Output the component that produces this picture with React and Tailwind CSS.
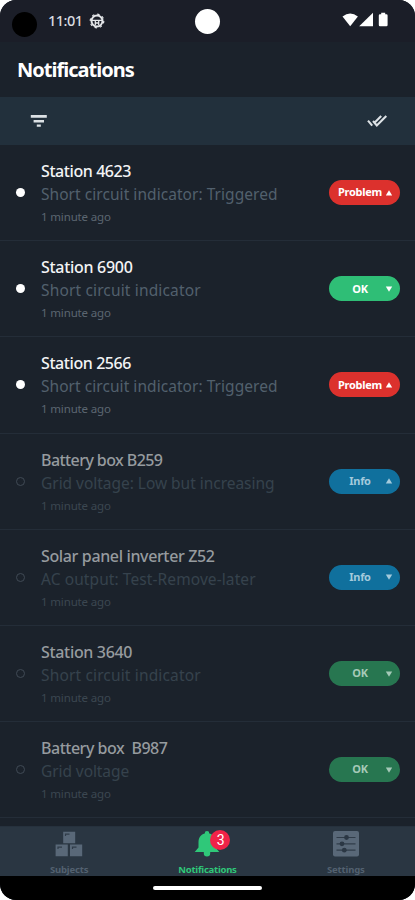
const notifications = [
  { id: 1, title: 'Station 4623', detail: 'Short circuit indicator: Triggered', status: 'Problem', trend: 'up', unread: true, titleTone: 'tracking-[-0.42px]', detailTone: 'tracking-[0.05px]' },
  { id: 2, title: 'Station 6900', detail: 'Short circuit indicator', status: 'OK', trend: 'down', unread: true, titleTone: 'tracking-[-0.3px]', detailTone: 'tracking-[0.15px]' },
  { id: 3, title: 'Station 2566', detail: 'Short circuit indicator: Triggered', status: 'Problem', trend: 'up', unread: true, titleTone: 'tracking-[-0.42px]', detailTone: 'tracking-[0.05px]' },
  { id: 4, title: 'Battery box B259', detail: 'Grid voltage: Low but increasing', status: 'Info', trend: 'up', unread: false, titleTone: 'tracking-[-0.57px]', detailTone: 'tracking-[-0.03px]' },
  { id: 5, title: 'Solar panel inverter Z52', detail: 'AC output: Test-Remove-later', status: 'Info', trend: 'down', unread: false, titleTone: 'tracking-[-0.36px]', detailTone: 'tracking-[0.09px]' },
  { id: 6, title: 'Station 3640', detail: 'Short circuit indicator', status: 'OK', trend: 'down', unread: false, titleTone: 'tracking-[-0.33px]', detailTone: 'tracking-[0.15px]' },
  { id: 7, title: 'Battery box  B987', detail: 'Grid voltage', status: 'OK', trend: 'down', unread: false, titleTone: 'tracking-[-0.49px]', detailTone: 'tracking-[-0.08px]' },
];

const pillTones = {
  Problem: 'bg-[#dc312d] text-white',
  OK: 'bg-[#2fbe76] text-white',
  Info: 'bg-[#1098cf] text-white',
};

const readPillTones = {
  Problem: 'bg-[#8a2a2c] text-[#b5c3c8]',
  OK: 'bg-[#277650] text-[#a5c9b8]',
  Info: 'bg-[#10709d] text-[#a3cadc]',
};

function StatusBar() {
  return (
    <div className="relative flex h-[42px] items-center justify-between bg-[#1b1e28] pr-[27px] pl-[12px]">
      <div className="flex items-center">
        <span className="mt-[6px] h-[25px] w-[25px] rounded-full bg-black" />
        <span className="ml-[11px] text-[14.5px] font-medium tracking-[-0.5px] text-[#d9dce0]">11:01</span>
        <svg viewBox="0 0 16 16" className="-mt-[1px] ml-[6px] h-[16px] w-[16px]" fill="none" stroke="#e4e6e9">
          <circle cx="8" cy="8" r="5.5" strokeWidth="2" />
          <circle cx="8" cy="8" r="6.8" strokeWidth="1.2" strokeDasharray="2.4 2.94" />
          <path d="M3 7.4h10M6.3 7.4v4.6M9.7 7.4v4.6M6.3 10h3.4" strokeWidth="1.3" />
        </svg>
      </div>
      <span className="absolute top-[9px] left-[195px] h-[25px] w-[25px] rounded-full bg-white" />
      <svg viewBox="0 0 46 16" className="-mt-[2px] h-[16px] w-[46px]" fill="#fff">
        <path d="M0.5 4.6Q8.2-1.8 15.9 4.6L8.2 14.2Z" />
        <path d="M31 .7V14.2H17.2Z" />
        <path d="M39.2 0.8h4v1.4h1.2q1.2 0 1.2 1.2v9.6q0 1.2-1.2 1.2h-6.4q-1.2 0-1.2-1.2V3.4q0-1.2 1.2-1.2h1.2Z" />
      </svg>
    </div>
  );
}

function Toolbar() {
  return (
    <div className="flex h-[48px] items-center justify-between bg-[#22303c] pr-[27px] pl-[30px]">
      <svg viewBox="0 0 18 14" className="-mt-[1px] h-[14px] w-[18px]" fill="#dce1e5">
        <path d="M.8 1h16v2.8H.8zM3.6 6h10.4v2.4H3.6zM6.8 10.4h4v2.4h-4z" />
      </svg>
      <svg viewBox="0 0 22 14" className="-mt-[1px] h-[14px] w-[22px]" fill="none" stroke="#dce1e5" strokeWidth="2.1">
        <path d="M2 6.6L6.2 11.6M7 7l3.8 4.4L20.3 2M15.2 2L8 9.2" />
      </svg>
    </div>
  );
}

function StatusPill({ status, trend, unread }) {
  const tone = unread ? pillTones[status] : readPillTones[status];

  return (
    <span className={`flex h-[25px] w-[71px] shrink-0 items-center rounded-full pr-[7px] pl-[7px] text-[11px] font-bold tracking-[-0.3px] ${tone}`}>
      <span className="flex-1 text-center whitespace-nowrap">{status}</span>
      <svg viewBox="0 0 8 8" className="h-[8px] w-[8px]" fill="currentColor">
        <path d={trend === 'up' ? 'M4 1.2L7.2 6.5H.8Z' : 'M.8 1.5h6.4L4 6.8Z'} />
      </svg>
    </span>
  );
}

function NotificationRow({ item }) {
  return (
    <li className="flex h-[96.2px] items-center border-b border-[#242d38] pr-[15.5px] pl-[16px]">
      <span className={`h-[9px] w-[9px] shrink-0 rounded-full ${item.unread ? 'bg-white' : 'border-[1.5px] border-[#404a55]'}`} />
      <div className="ml-[16px] flex-1 pt-[3px] whitespace-pre">
        <p className={`text-[16px] leading-[23px] font-medium ${item.titleTone} ${item.unread ? 'text-[#f3f4f5]' : 'text-[#969b9f]'}`}>{item.title}</p>
        <p className={`text-[15.5px] leading-[23px] ${item.detailTone} ${item.unread ? 'text-[#52606d]' : 'text-[#36424d]'}`}>{item.detail}</p>
        <p className={`text-[11.5px] leading-[22px] tracking-[-0.15px] ${item.unread ? 'text-[#5b6671]' : 'text-[#3c4751]'}`}>1 minute ago</p>
      </div>
      <StatusPill status={item.status} trend={item.trend} unread={item.unread} />
    </li>
  );
}

function BottomNav() {
  return (
    <nav className="grid h-[50px] grid-cols-3 border-t border-[#26313d] bg-[#2a3642] text-[9.5px] font-bold tracking-[-0.15px] text-[#536170]">
      <div className="flex flex-col items-center pt-[4px]">
        <svg viewBox="0 0 28 26" className="h-[26px] w-[28px]" fill="#596878">
          <path d="M8.2.8h12v11.4h-12zM.6 13.6h12.2v11.6H.6zM15 13.6h12.2v11.6H15z" />
          <path d="M10.5 5V3.2h4M3 18v-1.8h4M17.5 18v-1.8h4" fill="none" stroke="#303c49" strokeWidth="1.2" />
        </svg>
        <span className="mt-[5px] leading-[16px]">Subjects</span>
      </div>
      <div className="flex flex-col items-center pt-[4px] text-[#2fc879]">
        <div className="relative">
          <svg viewBox="0 0 26 26" className="h-[26px] w-[26px]" fill="currentColor">
            <path d="M10.7 2.4a2.3 2.3 0 0 1 4.6 0C19.8 3.5 21.5 7 21.5 11v5.4l3.8 4.6H.7l3.8-4.6V11c0-4 1.8-7.5 6.2-8.6ZM9.8 21h6.4v1.3a3.2 3.2 0 0 1-6.4 0Z" />
          </svg>
          <span className="absolute -top-[1px] left-[16px] flex h-[20px] w-[20px] items-center justify-center rounded-full bg-[#f02348] font-[Roboto] text-[14px] font-normal text-white">3</span>
        </div>
        <span className="mt-[5px] tracking-[-0.25px] leading-[16px]">Notifications</span>
      </div>
      <div className="flex flex-col items-center pt-[4px]">
        <svg viewBox="0 0 26 26" className="h-[26px] w-[26px]">
          <rect width="26" height="25.5" rx="2" fill="#596878" />
          <path d="M3.5 6.5h19M3.5 12.8h19M3.5 19.2h19" stroke="#303c49" strokeWidth="1.2" />
          <g fill="#2b3744">
            <circle cx="13.5" cy="6.5" r="2.4" />
            <circle cx="9" cy="12.8" r="2.4" />
            <circle cx="11.3" cy="19.2" r="2.4" />
          </g>
        </svg>
        <span className="mt-[5px] leading-[16px]">Settings</span>
      </div>
    </nav>
  );
}

export default function App() {
  return (
    <div className="h-[900px] w-[415px] overflow-hidden bg-white font-['Noto_Sans',sans-serif]">
      <div className="flex h-full flex-col overflow-hidden rounded-[16px] bg-[#1b222b]">
        <StatusBar />
        <header className="flex h-[55px] items-center pl-[17px]">
          <h1 className="text-[20px] font-bold tracking-[-0.98px] text-white">Notifications</h1>
        </header>
        <Toolbar />
        <ul className="flex-1">
          {notifications.map((item) => (
            <NotificationRow key={item.id} item={item} />
          ))}
        </ul>
        <BottomNav />
        <div className="flex h-[24px] justify-center bg-black pt-[10px]">
          <span className="h-[4px] w-[109px] rounded-full bg-white" />
        </div>
      </div>
    </div>
  );
}
